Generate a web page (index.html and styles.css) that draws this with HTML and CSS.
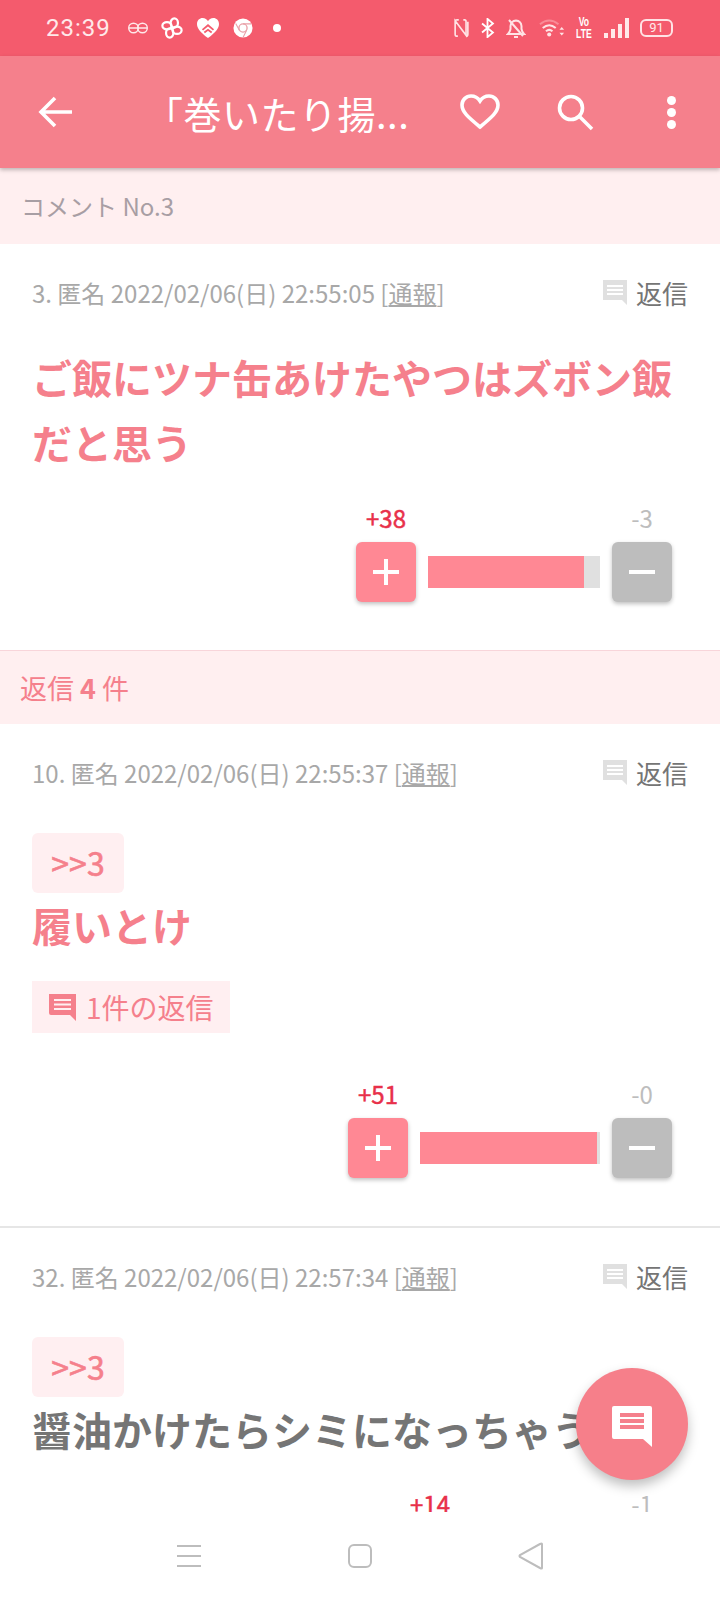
FILE: index.html
```html
<!DOCTYPE html>
<html lang="ja">
<head>
    <meta charset="UTF-8">
    <meta name="viewport" content="width=device-width, initial-scale=1.0">
    <title>コメント No.3</title>
    <link rel="stylesheet" href="styles.css">
</head>
<body>

<!-- STATUS BAR -->
<div class="status-bar">
    <span class="time">23:39</span>
    <div class="status-left">
        <svg width="20" height="14" viewBox="0 0 20 14"><circle cx="5.500" cy="7" r="4.800" fill="none" stroke="#ffe9ea" stroke-width="1.400"/><circle cx="14.500" cy="7" r="4.800" fill="none" stroke="#ffe9ea" stroke-width="1.400"/><path d="M1 7h9M10 7h9" stroke="#ffe9ea" stroke-width="1.400"/></svg>
        <svg width="22" height="22" viewBox="0 0 24 24"><g fill="none" stroke="#fff" stroke-width="2.400"><ellipse cx="14.500" cy="6.500" rx="4" ry="5"/><ellipse cx="14.500" cy="6.500" rx="4" ry="5" transform="rotate(90 12 12)"/><ellipse cx="14.500" cy="6.500" rx="4" ry="5" transform="rotate(180 12 12)"/><ellipse cx="14.500" cy="6.500" rx="4" ry="5" transform="rotate(270 12 12)"/></g></svg>
        <svg width="24" height="22" viewBox="0 0 26 24"><path d="M13 23C4 16 1 12 1 7.500 1 3.500 4 1 7 1c3 0 5 1.500 6 3.500C14 2.500 16 1 19 1c3 0 6 2.500 6 6.500 0 4.500-3 8.500-12 15.500z" fill="#fff"/><path d="M7 14l6-5 6 5M9 17l4-3 4 3" fill="none" stroke="#f45b6d" stroke-width="2"/></svg>
        <svg width="20" height="20" viewBox="0 0 22 22"><circle cx="11" cy="11" r="10.500" fill="#fff"/><circle cx="11" cy="11" r="4.500" fill="none" stroke="#e9a0a8" stroke-width="1.500"/><path d="M11 6.500h9M7 13.500L3 6M15 13.500l-4 8" stroke="#e9a0a8" stroke-width="1.200"/></svg>
        <span class="dot"></span>
    </div>
    <div class="status-right">
        <svg width="15" height="20" viewBox="0 0 16 22"><path d="M4 20H2.500Q1 20 1 18V3l12 16V4Q13 2 11.500 2H10M1 3Q1 2 3 2H5M15 20h-2Q15 20 15 18V4" fill="none" stroke="#ffe3e5" stroke-width="1.800"/></svg>
        <svg width="15" height="20" viewBox="0 0 16 22"><path d="M2 6l12 10-6 5V1l6 5L2 16" fill="none" stroke="#fff" stroke-width="2"/></svg>
        <svg width="20" height="22" viewBox="0 0 20 22"><path d="M2 17q2-2 2.500-5V9Q5 4 10 3.500 15 4 15.500 9v3q.5 3 2.500 5zM8 20h4M3 3l14 16" fill="none" stroke="#ffe3e5" stroke-width="2"/></svg>
        <svg class="wifi" width="26" height="22" viewBox="0 0 28 22"><path d="M1 7Q11-1 21 7" fill="none" stroke="#f98b97" stroke-width="2"/><path d="M4 11q7-6 14 0M7.500 14.500q3.500-3 7 0" fill="none" stroke="#ffe3e5" stroke-width="2.200"/><circle cx="11" cy="18" r="2.200" fill="#ffe3e5"/><path d="M22 13l2.500-3 2.500 3zM22 16l2.500 3 2.500-3z" fill="#ffe3e5"/></svg>
        <span class="volte">Vo<br>LTE</span>
        <div class="signal">
            <i class="s1"></i><i class="s2"></i><i class="s3"></i><i class="s4"></i>
        </div>
        <div class="battery"><span>91</span></div>
    </div>
</div>

<!-- APP BAR -->
<div class="app-bar">
    <svg class="back" width="40" height="40" viewBox="0 0 40 40"><path d="M36 20H6M19 6L5 20l14 14" fill="none" stroke="#fff" stroke-width="3.600"/></svg>
    <div class="title">「巻いたり揚...</div>
    <svg class="heart" width="40" height="36" viewBox="0 0 40 36"><path d="M20 33C8 23 2 18 2 11 2 6 6 2 11 2c4 0 7 2 9 5 2-3 5-5 9-5 5 0 9 4 9 9 0 7-6 12-18 22z" fill="none" stroke="#fff" stroke-width="3.600"/></svg>
    <svg class="search" width="38" height="38" viewBox="0 0 38 38"><circle cx="15" cy="15" r="11.500" fill="none" stroke="#fff" stroke-width="3.600"/><path d="M23.500 23.500L36 36" stroke="#fff" stroke-width="3.600"/></svg>
    <div class="more"><i></i><i></i><i></i></div>
</div>

<div class="section-head">コメント No.3</div>

<!-- COMMENT 3 -->
<div class="comment first">
    <div class="meta">
        <span class="info">3. 匿名 2022/02/06(日) 22:55:05 [<u>通報</u>]</span>
        <span class="reply">
            <svg width="26" height="26" viewBox="0 0 26 26"><path d="M1 1h24v25l-5-5H1z" fill="#e0e0e0"/><path d="M5 7h16M5 11h16M5 15h16" stroke="#fff" stroke-width="2"/></svg>
            返信
        </span>
    </div>
    <div class="body pink">ご飯にツナ缶あけたやつはズボン飯だと思う</div>
    <div class="votes v1">
        <span class="up-num">+38</span>
        <span class="down-num">-3</span>
        <div class="btn plus"></div>
        <div class="bar" style="width:172px"><div class="fill" style="width:156px"></div></div>
        <div class="btn minus"></div>
    </div>
</div>

<div class="section-head replies">返信 <b>4</b> 件</div>

<!-- COMMENT 10 -->
<div class="comment bordered">
    <div class="meta">
        <span class="info">10. 匿名 2022/02/06(日) 22:55:37 [<u>通報</u>]</span>
        <span class="reply">
            <svg width="26" height="26" viewBox="0 0 26 26"><path d="M1 1h24v25l-5-5H1z" fill="#e0e0e0"/><path d="M5 7h16M5 11h16M5 15h16" stroke="#fff" stroke-width="2"/></svg>
            返信
        </span>
    </div>
    <div class="anchor">&gt;&gt;3</div>
    <div class="body pink short">履いとけ</div>
    <div class="reply-count">
        <svg width="28" height="28" viewBox="0 0 28 28"><path d="M1 1h27v27l-6-6H3q-2 0-2-2z" fill="#f5808c"/><path d="M6 7h17M6 11.500h17M6 16h17" stroke="#ffeff1" stroke-width="2"/></svg>
        1件の返信
    </div>
    <div class="votes v2">
        <span class="up-num">+51</span>
        <span class="down-num">-0</span>
        <div class="btn plus"></div>
        <div class="bar" style="width:180px"><div class="fill" style="width:177px"></div></div>
        <div class="btn minus"></div>
    </div>
</div>

<!-- COMMENT 32 -->
<div class="comment">
    <div class="meta">
        <span class="info">32. 匿名 2022/02/06(日) 22:57:34 [<u>通報</u>]</span>
        <span class="reply">
            <svg width="26" height="26" viewBox="0 0 26 26"><path d="M1 1h24v25l-5-5H1z" fill="#e0e0e0"/><path d="M5 7h16M5 11h16M5 15h16" stroke="#fff" stroke-width="2"/></svg>
            返信
        </span>
    </div>
    <div class="anchor">&gt;&gt;3</div>
    <div class="body gray short">醤油かけたらシミになっちゃう</div>
    <div class="votes v3">
        <span class="up-num">+14</span>
        <span class="down-num">-1</span>
        <div class="btn plus"></div>
        <div class="bar" style="width:128px"><div class="fill" style="width:120px"></div></div>
        <div class="btn minus"></div>
    </div>
</div>

<!-- FAB -->
<div class="fab">
    <svg width="42" height="42" viewBox="0 0 42 42"><path d="M3 1h36q2 0 2 2v39l-9-8H3q-2 0-2-2V3q0-2 2-2z" fill="#fff"/><path d="M9 10h24M9 16h24M9 22h24" stroke="#f5808c" stroke-width="4"/></svg>
</div>

<!-- NAV BAR -->
<div class="nav-bar">
    <svg width="26" height="24" viewBox="0 0 26 24"><path d="M1 2h24M1 12h24M1 22h24" stroke="#bdbdbd" stroke-width="2"/></svg>
    <svg width="24" height="24" viewBox="0 0 24 24"><rect x="1" y="1" width="22" height="22" rx="5" fill="none" stroke="#bdbdbd" stroke-width="2"/></svg>
    <svg width="26" height="28" viewBox="0 0 26 28"><path d="M24 2v24q0 1-2 0L2 15q-1-1 0-2L22 2q2-1 2 0z" fill="none" stroke="#bdbdbd" stroke-width="2"/></svg>
</div>

</body>
</html>
```

FILE: styles.css
```css
* {
    box-sizing: border-box;
}
html, body {
    margin: 0;
    height: 1600px;
    overflow: hidden;
}
body {
    position: relative;
    font-family: "Noto Sans CJK JP", "Noto Sans", sans-serif;
    background: #fff;
}

/* status bar */
.status-bar {
    height: 56px;
    background: #f45b6d;
    display: flex;
    align-items: center;
    padding: 0 0 0 46px;
    color: #ffe9ea;
}
.time {
    font-family: Roboto, sans-serif;
    font-size: 24px;
    letter-spacing: 1px;
    width: 82px;
}
.status-left {
    display: flex;
    align-items: center;
    gap: 13px;
}
.dot {
    width: 8px;
    height: 8px;
    border-radius: 50%;
    background: #fff;
    margin-left: 7px;
}
.status-right {
    display: flex;
    align-items: center;
    margin-left: auto;
    margin-right: 47px;
    gap: 11px;
}
.wifi {
    margin-left: 2px;
}
.volte {
    font-family: "Liberation Sans", sans-serif;
    font-size: 12px;
    font-weight: bold;
    line-height: 12px;
    text-align: center;
    color: #fff;
    width: 22px;
    margin-right: -6px;
    transform: scaleX(0.72);
    transform-origin: left;
}
.signal {
    display: flex;
    align-items: flex-end;
    gap: 3px;
    height: 20px;
    margin-left: 1px;
}
.signal i {
    display: block;
    width: 4px;
    background: #ffe9ea;
}
.s1 { height: 5px; }
.s2 { height: 9px; }
.s3 { height: 14px; }
.s4 { height: 20px; }
.battery {
    width: 33px;
    height: 18px;
    border: 2px solid #ffe3e5;
    border-radius: 6px;
    font-family: Roboto, sans-serif;
    font-size: 13px;
    line-height: 14px;
    text-align: center;
    color: #ffe9ea;
}

/* app bar */
.app-bar {
    height: 112px;
    background: #f5808c;
    position: relative;
    display: flex;
    align-items: center;
    color: #fff;
    box-shadow: 0px 2px 4px rgba(0, 0, 0, 0.25);
}
.back {
    margin-left: 36px;
}
.title {
    font-size: 38px;
    letter-spacing: 0.5px;
    margin-left: 69px;
    width: 305px;
    white-space: nowrap;
    color: #fff;
}
.heart {
    margin-left: 10px;
}
.search {
    margin-left: 56px;
}
.more {
    margin-left: 73px;
    display: flex;
    flex-direction: column;
    gap: 3px;
}
.more i {
    display: block;
    width: 9px;
    height: 9px;
    border-radius: 50%;
    background: #fff;
}

/* section headers */
.section-head {
    height: 76px;
    background: #ffeff0;
    padding-left: 21px;
    font-size: 24px;
    line-height: 76px;
    color: #a89ea4;
}
.section-head.replies {
    height: 74px;
    border-top: 1px solid #f8d5da;
    font-size: 27px;
    line-height: 74px;
    color: #f5808c;
    padding-left: 20px;
}

/* comments */
.comment {
    padding: 28px 32px 0;
    position: relative;
}
.comment.first {
    height: 406px;
}
.comment.bordered {
    height: 504px;
    border-bottom: 2px solid #e6e6e6;
}
.meta {
    display: flex;
    justify-content: space-between;
    align-items: center;
    height: 40px;
}
.info {
    font-size: 24px;
    color: #a8a8a8;
    white-space: nowrap;
}
.reply {
    display: flex;
    align-items: center;
    gap: 8px;
    font-size: 26px;
    color: #757575;
}
.body {
    font-size: 40px;
    font-weight: 700;
    line-height: 65px;
    margin-top: 33px;
}
.body.short {
    margin-top: 0;
    white-space: nowrap;
}
.pink {
    color: #f5808c;
}
.gray {
    color: #757575;
}
.anchor {
    width: 92px;
    height: 60px;
    margin-top: 41px;
    background: #ffeff1;
    border-radius: 6px;
    font-size: 32px;
    font-weight: 400;
    -webkit-text-stroke: 0.6px #f5808c;
    line-height: 58px;
    text-align: center;
    color: #f5808c;
}
.reply-count {
    display: flex;
    align-items: center;
    gap: 10px;
    width: 198px;
    height: 52px;
    margin-top: 23px;
    padding-left: 16px;
    background: #ffeff1;
    font-size: 28px;
    color: #f5808c;
}

/* vote widget */
.votes {
    position: absolute;
    right: 48px;
    display: flex;
    align-items: center;
    gap: 12px;
}
.v1 { top: 298px; }
.v2 { top: 394px; }
.v3 { top: 300px; }
.btn {
    width: 60px;
    height: 60px;
    border-radius: 6px;
    position: relative;
    box-shadow: 0px 2px 4px rgba(0, 0, 0, 0.25);
}
.plus {
    background: #ff8894;
}
.minus {
    background: #bdbdbd;
}
.btn::before,
.plus::after {
    content: "";
    position: absolute;
    background: #fff;
    left: 17px;
    top: 28px;
    width: 26px;
    height: 4px;
}
.plus::after {
    left: 28px;
    top: 17px;
    width: 4px;
    height: 26px;
}
.bar {
    height: 32px;
    background: #e0e0e0;
}
.fill {
    height: 32px;
    background: #ff8894;
}
.up-num,
.down-num {
    position: absolute;
    top: -40px;
    width: 60px;
    text-align: center;
    font-size: 24px;
    line-height: 32px;
}
.up-num {
    left: 0;
    color: #e8304a;
    -webkit-text-stroke: 0.5px #e8304a;
}
.down-num {
    right: 0;
    color: #bdbdbd;
}

/* floating button and nav */
.fab {
    position: absolute;
    left: 576px;
    top: 1368px;
    width: 112px;
    height: 112px;
    border-radius: 50%;
    background: #f67f8a;
    box-shadow: 0px 6px 12px rgba(0, 0, 0, 0.25);
    display: flex;
    align-items: center;
    justify-content: center;
}
.fab svg {
    margin-top: 4px;
}
.nav-bar {
    position: absolute;
    left: 0;
    right: 0;
    bottom: 0;
    height: 88px;
    background: #fff;
    display: flex;
    align-items: center;
    padding: 0 176px 0 176px;
    justify-content: space-between;
}
```
